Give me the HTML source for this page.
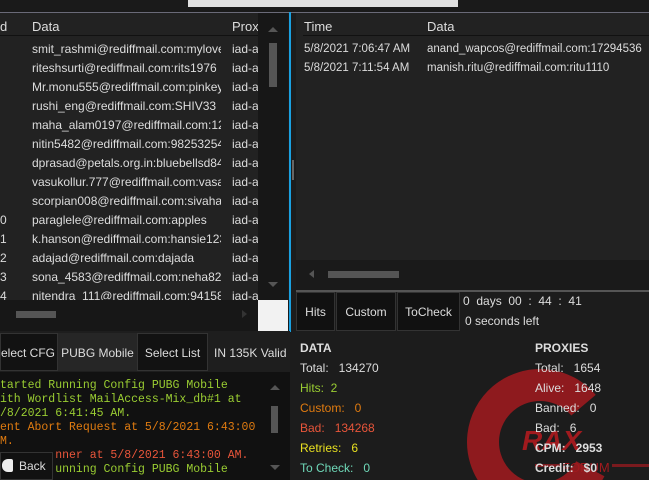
<!DOCTYPE html>
<html><head><meta charset="utf-8"><style>
*{margin:0;padding:0;box-sizing:border-box}
html,body{width:649px;height:480px;overflow:hidden}
body{background:#1c1c1c;font-family:"Liberation Sans",sans-serif;font-size:11px;color:#ddd;position:relative}
.a{position:absolute;white-space:nowrap}
.mono{font-family:"Liberation Mono",monospace;font-size:11.5px}
</style></head><body>
<div class="a" style="left:0;top:0;width:649px;height:12px;background:#1a1a1a"></div>
<div class="a" style="left:188px;top:0;width:270px;height:7px;background:#e0e0e0"></div>
<div class="a" style="left:0;top:12px;width:649px;height:1px;background:#6a6a78"></div>

<!-- left grid -->
<div class="a" style="left:0;top:13px;width:258px;height:287px;background:#222"></div>
<div class="a" style="left:0;top:35px;width:258px;height:1px;background:#111"></div>
<div class="a" style="left:0;top:19px;font-size:13px;color:#ddd">d</div>
<div class="a" style="left:32px;top:19px;font-size:13px;color:#ddd">Data</div>
<div class="a" style="left:232px;top:19px;font-size:13px;color:#ddd">Prox</div>
<div class="a" style="left:32px;top:40px;line-height:19px;font-size:12px;color:#ddd;width:189px;overflow:hidden">smit_rashmi@rediffmail.com:mylove<br>riteshsurti@rediffmail.com:rits1976<br>Mr.monu555@rediffmail.com:pinkey<br>rushi_eng@rediffmail.com:SHIV33<br>maha_alam0197@rediffmail.com:12<br>nitin5482@rediffmail.com:98253254<br>dprasad@petals.org.in:bluebellsd84<br>vasukollur.777@rediffmail.com:vasa<br>scorpian008@rediffmail.com:sivahar<br>paraglele@rediffmail.com:apples<br>k.hanson@rediffmail.com:hansie123<br>adajad@rediffmail.com:dajada<br>sona_4583@rediffmail.com:neha828<br>nitendra_111@rediffmail.com:94158</div>
<div class="a" style="left:232px;top:40px;line-height:19px;font-size:12px;width:26px;overflow:hidden">iad-a<br>iad-a<br>iad-a<br>iad-a<br>iad-a<br>iad-a<br>iad-a<br>iad-a<br>iad-a<br>iad-a<br>iad-a<br>iad-a<br>iad-a<br>iad-a</div>
<div class="a" style="left:0;top:211px;line-height:19px;font-size:12px">0<br>1<br>2<br>3<br>4</div>
<div class="a" style="left:258px;top:13px;width:30px;height:287px;background:#171717"></div>
<div class="a" style="left:268px;top:27px;border:5px solid transparent;border-bottom:5px solid #555;border-top:0"></div>
<div class="a" style="left:269px;top:43px;width:8px;height:44px;background:#555"></div>
<div class="a" style="left:268px;top:282px;border:5px solid transparent;border-top:5px solid #555;border-bottom:0"></div>
<div class="a" style="left:0;top:300px;width:258px;height:31px;background:#171717"></div>
<div class="a" style="left:16px;top:311px;width:40px;height:7px;background:#555"></div>
<div class="a" style="left:242px;top:310px;border:4px solid transparent;border-left:5px solid #333;border-right:0"></div>
<div class="a" style="left:258px;top:300px;width:30px;height:31px;background:#f2f2f2"></div>
<div class="a" style="left:289px;top:12px;width:2px;height:320px;background:#1aa0e0"></div>
<div class="a" style="left:292px;top:160px;width:2px;height:20px;background:#666"></div>

<!-- right grid -->
<div class="a" style="left:296px;top:13px;width:353px;height:247px;background:#222"></div>
<div class="a" style="left:303px;top:35px;width:346px;height:1px;background:#111"></div>
<div class="a" style="left:304px;top:19px;font-size:13px">Time</div>
<div class="a" style="left:427px;top:19px;font-size:13px">Data</div>
<div class="a" style="left:304px;top:40px;line-height:19px;font-size:11.5px">5/8/2021 7:06:47 AM<br>5/8/2021 7:11:54 AM</div>
<div class="a" style="left:427px;top:40px;line-height:19px;font-size:11.5px">anand_wapcos@rediffmail.com:17294536<br>manish.ritu@rediffmail.com:ritu1110</div>
<div class="a" style="left:296px;top:260px;width:353px;height:30px;background:#1a1a1a"></div>
<div class="a" style="left:309px;top:270px;border:4px solid transparent;border-right:5px solid #555;border-left:0"></div>
<div class="a" style="left:328px;top:271px;width:71px;height:7px;background:#555"></div>
<div class="a" style="left:296px;top:290px;width:353px;height:2px;background:#555"></div>

<div class="a" style="left:296px;top:292px;width:39px;height:39px;background:#111;border:1px solid #333;text-align:center;line-height:38px;font-size:12px">Hits</div>
<div class="a" style="left:336px;top:292px;width:60px;height:39px;background:#111;border:1px solid #333;text-align:center;line-height:38px;font-size:12px">Custom</div>
<div class="a" style="left:397px;top:292px;width:63px;height:39px;background:#111;border:1px solid #333;text-align:center;line-height:38px;font-size:12px">ToCheck</div>
<div class="a" style="left:463px;top:294px;font-size:12px">0&nbsp; days&nbsp; 00&nbsp; :&nbsp; 44&nbsp; :&nbsp; 41</div>
<div class="a" style="left:465px;top:314px;font-size:12px">0 seconds left</div>

<!-- logo -->
<svg class="a" style="left:440px;top:340px" width="209" height="140" viewBox="0 0 209 140">
<circle cx="100" cy="102" r="57" fill="none" stroke="#8e1a1e" stroke-width="32" stroke-dasharray="290 68" transform="rotate(28 100 102)"/>
<text x="82" y="110" font-family="Liberation Sans" font-weight="bold" font-style="italic" font-size="28" fill="#a01a1e">RAX</text>
<text x="122" y="132" font-family="Liberation Sans" font-size="13" fill="#a01a1e">FORUM</text>
<rect x="95" y="124" width="25" height="3" fill="#7a1a1e"/>
<rect x="172" y="124" width="37" height="3" fill="#7a1a1e"/>
</svg>

<!-- stats -->
<div class="a" style="left:300px;top:338px;font-size:12px;line-height:20px">
<b style="color:#ddd">DATA</b><br>Total:&nbsp;&nbsp; 134270<br><span style="color:#9acd32">Hits:&nbsp;&nbsp;2</span><br><span style="color:#e07b10">Custom:&nbsp;&nbsp; 0</span><br><span style="color:#e8553a">Bad:&nbsp;&nbsp; 134268</span><br><span style="color:#e8e020">Retries:&nbsp;&nbsp; 6</span><br><span style="color:#6fd8b8">To Check:&nbsp;&nbsp; 0</span></div>
<div class="a" style="left:535px;top:338px;font-size:12px;line-height:20px">
<b>PROXIES</b><br>Total:&nbsp;&nbsp; 1654<br>Alive:&nbsp;&nbsp; 1648<br>Banned:&nbsp;&nbsp; 0<br>Bad:&nbsp;&nbsp; 6<br><b>CPM:&nbsp;&nbsp; 2953</b><br><b>Credit:&nbsp;&nbsp; $0</b></div>

<!-- bottom left -->
<div class="a" style="left:0;top:331px;width:290px;height:41px;background:#1e1e1e"></div>
<div class="a" style="left:0;top:333px;width:58px;height:38px;background:#121212;border:1px solid #333;line-height:38px;font-size:12px;text-align:right;padding-right:8px">elect CFG</div>
<div class="a" style="left:58px;top:333px;width:79px;height:38px;background:#262626;line-height:40px;font-size:12px;text-align:center">PUBG Mobile</div>
<div class="a" style="left:137px;top:333px;width:71px;height:38px;background:#121212;border:1px solid #333;line-height:38px;font-size:12px;text-align:center">Select List</div>
<div class="a" style="left:214px;top:333px;line-height:40px;font-size:12px;width:76px;overflow:hidden">IN 135K Valid (</div>
<div class="a" style="left:0;top:372px;width:290px;height:108px;background:#111"></div>
<div class="a mono" style="left:0;top:379px;line-height:14px;color:#9acd32;width:262px;height:100px;overflow:hidden">tarted Running Config PUBG Mobile<br>ith Wordlist MailAccess-Mix_db#1 at<br>/8/2021 6:41:45 AM.<br><span style="color:#e07b10">ent Abort Request at 5/8/2021 6:43:00<br>M.</span><br><span style="color:#e8553a">&nbsp;&nbsp;&nbsp;&nbsp;&nbsp;&nbsp;&nbsp;&nbsp;nner at 5/8/2021 6:43:00 AM.</span><br>&nbsp;&nbsp;&nbsp;&nbsp;&nbsp;&nbsp;&nbsp;&nbsp;unning Config PUBG Mobile</div>
<svg class="a" style="left:265px;top:380px" width="20" height="100"><path d="M5 10 L10 5 L15 10Z M5 85 L10 90 L15 85Z" fill="#555"/><rect x="6" y="26" width="7" height="27" fill="#555"/></svg>
<div class="a" style="left:0;top:452px;width:53px;height:28px;background:#111;border:1px solid #333;font-size:12px;line-height:26px;padding-left:18px;color:#ddd">Back</div>
<div class="a" style="left:2px;top:459px;width:11px;height:13px;background:#eee;border-radius:6px 2px 2px 6px"></div>
</body></html>
